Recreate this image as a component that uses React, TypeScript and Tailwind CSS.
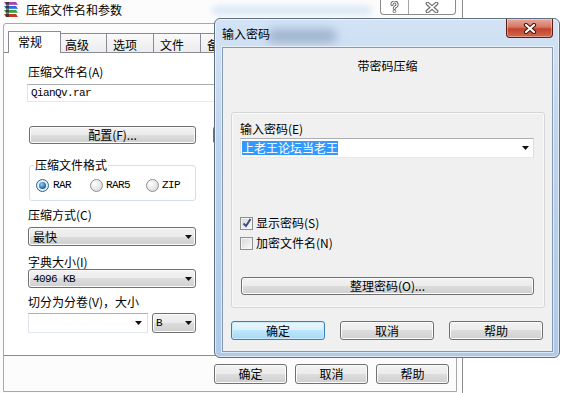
import type { ReactNode } from 'react'

const cjk = "font-['Noto_Sans_CJK_SC',sans-serif]"
const mono = "font-['Liberation_Mono',monospace] text-[11px] tracking-[-0.6px]"

// win7 push button look
const btn =
  'flex items-center justify-center rounded-[3px] border border-[#707070] bg-[linear-gradient(#f2f2f2_0%,#ebebeb_50%,#dddddd_50%,#cfcfcf_100%)] shadow-[inset_0_0_0_1px_#fbfbfb]'
const btnFocus =
  'flex items-center justify-center rounded-[3px] border border-[#3c7fb1] bg-[linear-gradient(#eaf6fd_0%,#d9f0fc_50%,#bee6fd_50%,#a7d9f5_100%)] shadow-[inset_0_0_0_1px_#c8ecff]'
const dropList =
  'flex items-center justify-between rounded-[3px] border border-[#707070] bg-[linear-gradient(#f2f2f2_0%,#ebebeb_50%,#dddddd_50%,#cfcfcf_100%)] shadow-[inset_0_0_0_1px_#fbfbfb]'
const editCombo =
  'flex items-center justify-between border border-[#abadb3] border-l-[#e2e3ea] border-r-[#dbdfe6] border-b-[#e3e9ef] bg-white'

function Arrow() {
  return (
    <svg width="7" height="4" viewBox="0 0 7 4" className="shrink-0">
      <path d="M0 0h7L3.5 4z" fill="#111" />
    </svg>
  )
}

function RarIcon() {
  return (
    <svg width="17" height="17" viewBox="0 0 17 17">
      <path d="M1 1h12l2 3H3z" fill="#a243b5" />
      <path d="M1 5h12l2 3H3z" fill="#2d6fd6" />
      <path d="M1 9h12l2 3H3z" fill="#34a53c" />
      <path d="M1 13h12l2 3H3z" fill="#c8372d" />
      <path d="M3 1h3v15H3z" fill="#2b2b2b" opacity="0.75" />
      <path d="M3 4h12M3 8h12M3 12h12" stroke="#fff" strokeWidth="0.6" opacity="0.6" />
    </svg>
  )
}

function Radio({ on }: { on?: boolean }) {
  if (on)
    return (
      <span className="flex h-[13px] w-[13px] shrink-0 items-center justify-center rounded-full border border-[#2c628b] bg-[radial-gradient(circle,#ffffff,#cfe3f1)]">
        <span className="block h-[7px] w-[7px] rounded-full bg-[radial-gradient(circle_at_40%_35%,#8fd4ff,#1b5e9c_70%)]" />
      </span>
    )
  return (
    <span className="block h-[13px] w-[13px] shrink-0 rounded-full border border-[#8e8f8f] bg-[radial-gradient(circle_at_35%_35%,#ffffff,#d2d2d2)]" />
  )
}

function Check({ on, children }: { on?: boolean; children: ReactNode }) {
  return (
    <div className="flex h-[14px] items-center gap-[3px]">
      <span className="flex h-[13px] w-[13px] shrink-0 items-center justify-center border border-[#8e8f8f] bg-[linear-gradient(135deg,#d6d6d6,#fbfbfb)] shadow-[inset_0_0_0_1px_#f4f4f4]">
        {on && (
          <svg width="10" height="10" viewBox="0 0 10 10">
            <path d="M1.5 5.5l2.5 2.5 4.5-7" fill="none" stroke="#3c4d88" strokeWidth="2" />
          </svg>
        )}
      </span>
      <span>{children}</span>
    </div>
  )
}

function HollowX({ w, h }: { w: number; h: number }) {
  return (
    <svg width={w} height={h} viewBox="0 0 12 10">
      <path d="M2 1.5l8 7M10 1.5l-8 7" stroke="#6d6d6d" strokeWidth="3.6" strokeLinecap="round" />
      <path d="M2 1.5l8 7M10 1.5l-8 7" stroke="#fff" strokeWidth="1.5" strokeLinecap="round" />
    </svg>
  )
}

function HollowHelp() {
  return (
    <svg width="9" height="12" viewBox="0 0 9 12">
      <path d="M2 3.5a2.5 2.5 0 1 1 3.2 2.4c-.8.3-.8.8-.8 1.6" fill="none" stroke="#6d6d6d" strokeWidth="3.2" strokeLinecap="round" />
      <path d="M2 3.5a2.5 2.5 0 1 1 3.2 2.4c-.8.3-.8.8-.8 1.6" fill="none" stroke="#fff" strokeWidth="1.2" strokeLinecap="round" />
      <circle cx="4.4" cy="10.3" r="1.4" fill="#fff" stroke="#6d6d6d" strokeWidth="0.9" />
    </svg>
  )
}

function CloseX() {
  return (
    <svg width="14" height="11" viewBox="0 0 14 11">
      <path d="M3 2l8 7M11 2l-8 7" stroke="#43140c" strokeWidth="4.2" strokeLinecap="round" />
      <path d="M3 2l8 7M11 2l-8 7" stroke="#fff" strokeWidth="2.2" strokeLinecap="round" />
    </svg>
  )
}

function PasswordDialog() {
  return (
    <div className="absolute left-[214px] top-[18px] flex h-[340px] w-[346px] flex-col overflow-hidden rounded-[6px] border border-[#5f6f84] bg-[linear-gradient(#d3e3f5,#bcd3ec_40%,#aecae8)] shadow-[inset_0_0_0_1px_rgba(255,255,255,0.6)]">
      <span className="absolute left-[52px] top-[10px] h-[14px] w-[70px] rounded-full bg-[#7f97b5] opacity-60 blur-[5px]" />
      <div className="relative flex h-[28px] shrink-0 items-start">
        <span className="ml-[7px] pt-[8px] leading-[14px]">输入密码</span>
        <div className="flex-1" />
        <div className="mr-[6px] flex h-[19px] w-[47px] items-center justify-center rounded-b-[4px] border border-t-0 border-[#5b1d14] bg-[linear-gradient(#e9a99b_0%,#d47763_45%,#c2432e_55%,#d06a4c_100%)] shadow-[inset_0_0_0_1px_rgba(255,255,255,0.35)]">
          <CloseX />
        </div>
      </div>
      <div className="relative mx-[7px] flex h-[305px] w-[331px] flex-col border border-[#8799b1] bg-[#f0f0f0] shadow-[0_0_0_1px_rgba(255,255,255,0.55)]">
        <div className="mt-[11px] text-center leading-[14px]">带密码压缩</div>
        <div className="ml-[8px] mt-[39px] flex h-[196px] w-[314px] flex-col rounded-[3px] border border-[#d5d5d5] shadow-[inset_0_0_0_1px_#fafafa]">
          <div className="ml-[8px] mt-[9px] leading-[14px]">输入密码(E)</div>
          <div className={`${editCombo} ml-[8px] mt-[2px] h-[20px] w-[294px] pl-[1px] pr-[4px]`}>
            <span className="bg-[#3399ff] leading-[14px] text-white">上老王论坛当老王</span>
            <Arrow />
          </div>
          <div className="ml-[8px] mt-[58px]">
            <Check on>显示密码(S)</Check>
          </div>
          <div className="ml-[8px] mt-[6px]">
            <Check>加密文件名(N)</Check>
          </div>
          <div className={`${btn} ml-[9px] mt-[27px] h-[18px] w-[293px] leading-[14px]`}>整理密码(O)...</div>
        </div>
        <div className="ml-[8px] mt-[13px] flex gap-[15px] leading-[14px]">
          <div className={`${btnFocus} h-[19px] w-[94px]`}>确定</div>
          <div className={`${btn} h-[19px] w-[94px]`}>取消</div>
          <div className={`${btn} h-[19px] w-[94px]`}>帮助</div>
        </div>
      </div>
    </div>
  )
}

export default function App() {
  return (
    <div className={`${cjk} relative h-[393px] w-[565px] overflow-hidden bg-white text-[12px] text-black`}>
      {/* background window: 压缩文件名和参数 */}
      <div className="flex h-[393px] w-[463px] flex-col border-r border-[#8c8c8c] bg-[#fcfcfc]">
        <div className="relative flex h-[23px] shrink-0 items-start">
          <span className="absolute left-[212px] top-[6px] h-[9px] w-[160px] rounded-full bg-[#c4dbf2] opacity-60 blur-[3px]" />
          <span className="ml-[3px] mt-[1px]">
            <RarIcon />
          </span>
          <span className="relative ml-[6px] mt-[3px] leading-[14px]">压缩文件名和参数</span>
          <div className="flex-1" />
          <div className="relative mr-[6px] flex h-[15px] w-[76px] rounded-b-[4px] border border-t-0 border-[#8b8b8b] bg-white">
            <div className="flex w-[28px] items-center justify-center border-r border-[#a5a5a5]">
              <HollowHelp />
            </div>
            <div className="flex flex-1 items-center justify-center">
              <HollowX w={14} h={11} />
            </div>
          </div>
        </div>

        <div className="ml-[3px] mr-[5px] flex h-[369px] flex-col rounded-tl-[3px] border border-[#a8a8a8]">
          {/* tabs */}
          <div className="flex h-[28px] shrink-0 items-end pl-[4px] leading-[14px]">
            <div className="relative z-10 -mb-[1px] h-[22px] w-[53px] border border-b-0 border-[#898c95] bg-white pl-[9px] pt-[3px]">常规</div>
            <div className="h-[19px] w-[46px] border-t border-r border-[#898c95] bg-[linear-gradient(#fafafa,#ececec)] pl-[4px] pt-[4px]">高级</div>
            <div className="h-[19px] w-[47px] border-t border-r border-[#898c95] bg-[linear-gradient(#fafafa,#ececec)] pl-[6px] pt-[4px]">选项</div>
            <div className="h-[19px] w-[47px] border-t border-r border-[#898c95] bg-[linear-gradient(#fafafa,#ececec)] pl-[6px] pt-[4px]">文件</div>
            <div className="h-[19px] w-[47px] border-t border-r border-[#898c95] bg-[linear-gradient(#fafafa,#ececec)] pl-[6px] pt-[4px]">备</div>
          </div>

          {/* tab page */}
          <div className="flex h-[304px] w-[447px] shrink-0 flex-col border border-l-0 border-[#898c95] bg-white leading-[14px]">
            <div className="ml-[24px] mt-[12px]">压缩文件名(A)</div>
            <div className={`${editCombo} ml-[23px] mt-[5px] h-[18px] w-[420px] pl-[3px]`}>
              <span className={mono}>QianQv.rar</span>
            </div>
            <div className="mt-[24px] flex">
              <div className={`${btn} ml-[25px] h-[18px] w-[167px]`}>配置(F)...</div>
              <div className={`${btn} ml-[17px] h-[18px] w-[228px]`} />
            </div>
            <fieldset className="ml-[25px] mt-[14px] h-[43px] w-[167px] rounded-[3px] border border-[#d5dfe5] pl-[6px]">
              <legend className="-ml-[2px] px-[1px] leading-[14px]">压缩文件格式</legend>
              <div className="mt-[6px] flex h-[14px] items-center">
                <Radio on />
                <span className={`${mono} ml-[4px]`}>RAR</span>
                <span className="ml-[19px] flex">
                  <Radio />
                </span>
                <span className={`${mono} ml-[3px]`}>RAR5</span>
                <span className="ml-[16px] flex">
                  <Radio />
                </span>
                <span className={`${mono} ml-[3px]`}>ZIP</span>
              </div>
            </fieldset>
            <div className="ml-[24px] mt-[7px]">压缩方式(C)</div>
            <div className={`${dropList} ml-[24px] mt-[5px] h-[19px] w-[168px] pl-[4px] pr-[3px]`}>
              <span>最快</span>
              <Arrow />
            </div>
            <div className="ml-[24px] mt-[9px]">字典大小(I)</div>
            <div className={`${dropList} ml-[24px] h-[19px] w-[168px] pl-[4px] pr-[3px]`}>
              <span className={mono}>4096 KB</span>
              <Arrow />
            </div>
            <div className="ml-[24px] mt-[7px]">切分为分卷(V)，大小</div>
            <div className="mt-[4px] flex">
              <div className={`${editCombo} ml-[24px] h-[20px] w-[120px] pr-[5px]`}>
                <span />
                <Arrow />
              </div>
              <div className={`${dropList} ml-[4px] h-[20px] w-[44px] pl-[3px] pr-[3px]`}>
                <span className={mono}>B</span>
                <Arrow />
              </div>
            </div>
          </div>

          {/* bottom buttons */}
          <div className="mt-[8px] flex justify-end gap-[8px] pr-[7px] leading-[14px]">
            <div className={`${btn} h-[20px] w-[73px]`}>确定</div>
            <div className={`${btn} h-[20px] w-[73px]`}>取消</div>
            <div className={`${btn} h-[20px] w-[73px]`}>帮助</div>
          </div>
        </div>
      </div>

      <PasswordDialog />
    </div>
  )
}
